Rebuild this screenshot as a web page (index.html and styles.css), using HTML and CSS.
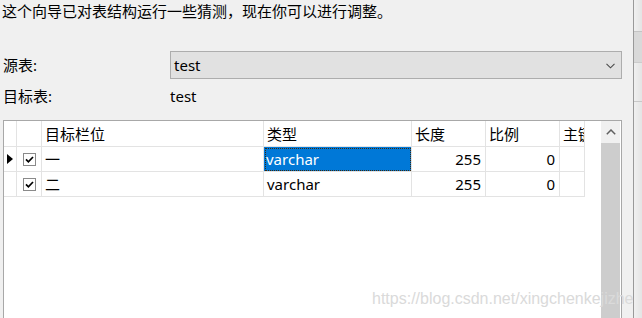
FILE: index.html
```html
<!DOCTYPE html>
<html lang="zh-CN">
<head>
    <meta charset="UTF-8">
    <title>导入向导 - 字段</title>
    <link rel="stylesheet" href="styles.css">
</head>
<body>
    <div class="wizard">
        <div class="main">
            <p class="intro">这个向导已对表结构运行一些猜测，现在你可以进行调整。</p>

            <div class="fields">
                <label class="field-label">源表:</label>
                <div class="combo">
                    <span>test</span>
                    <svg class="combo-arrow" width="9" height="6" viewBox="0 0 9 6">
                        <path d="M0.5 0.8 L4.5 4.8 L8.5 0.8" fill="none" stroke="#4a4a4a" stroke-width="1.1"/>
                    </svg>
                </div>
                <label class="field-label">目标表:</label>
                <div class="field-value">test</div>
            </div>

            <div class="grid-box">
                <table class="grid">
                    <colgroup>
                        <col class="c-rowhead">
                        <col class="c-check">
                        <col class="c-name">
                        <col class="c-type">
                        <col class="c-len">
                        <col class="c-scale">
                        <col class="c-key">
                    </colgroup>
                    <thead>
                        <tr>
                            <th></th>
                            <th></th>
                            <th>目标栏位</th>
                            <th>类型</th>
                            <th>长度</th>
                            <th>比例</th>
                            <th>主键</th>
                        </tr>
                    </thead>
                    <tbody>
                        <tr>
                            <td class="rowhead">
                                <svg width="6" height="10" viewBox="0 0 6 10"><polygon points="0,0 6,5 0,10" fill="#000"/></svg>
                            </td>
                            <td class="check">
                                <svg width="13" height="13" viewBox="0 0 13 13">
                                    <rect x="0.5" y="0.5" width="12" height="12" fill="#fff" stroke="#8a8a8a"/>
                                    <path d="M3 6.3 L5.4 8.8 L10 4" fill="none" stroke="#000" stroke-width="1.7"/>
                                </svg>
                            </td>
                            <td>一</td>
                            <td class="selected">varchar</td>
                            <td class="num">255</td>
                            <td class="num">0</td>
                            <td></td>
                        </tr>
                        <tr>
                            <td class="rowhead"></td>
                            <td class="check">
                                <svg width="13" height="13" viewBox="0 0 13 13">
                                    <rect x="0.5" y="0.5" width="12" height="12" fill="#fff" stroke="#8a8a8a"/>
                                    <path d="M3 6.3 L5.4 8.8 L10 4" fill="none" stroke="#000" stroke-width="1.7"/>
                                </svg>
                            </td>
                            <td>二</td>
                            <td>varchar</td>
                            <td class="num">255</td>
                            <td class="num">0</td>
                            <td></td>
                        </tr>
                    </tbody>
                </table>

                <div class="scrollbar">
                    <div class="scroll-up">
                        <svg width="10" height="6" viewBox="0 0 10 6">
                            <path d="M0.8 5.2 L5 1 L9.2 5.2" fill="none" stroke="#606060" stroke-width="1.5"/>
                        </svg>
                    </div>
                    <div class="scroll-thumb"></div>
                </div>
            </div>
        </div>

        <div class="side">
            <div class="side-band"></div>
        </div>
    </div>

    <div class="watermark">https://blog.csdn.net/xingchenkejizhe</div>
</body>
</html>
```

FILE: styles.css
```css
body {
    margin: 0;
    background: #f0f0f0;
    font-family: "Noto Sans", "Noto Sans CJK SC", sans-serif;
    font-size: 15px;
    color: #000;
    overflow: hidden;
}

.wizard {
    display: flex;
    height: 318px;
    overflow: hidden;
}

.main {
    width: 633px;
    border-right: 1px solid #999;
    flex-shrink: 0;
}

.intro {
    margin: 0;
    padding: 1px 0 0 2px;
    line-height: 20px;
}

.fields {
    display: grid;
    grid-template-columns: 167px 452px;
    grid-template-rows: 28px 24px;
    row-gap: 5px;
    padding-left: 3px;
    margin-top: 30px;
    align-items: center;
}

.field-label {
    line-height: 20px;
}

.combo {
    box-sizing: border-box;
    height: 28px;
    border: 1px solid #adadad;
    background: #e1e1e1;
    display: flex;
    align-items: center;
    justify-content: space-between;
    padding: 0 6px 1px 3px;
}

.combo-arrow {
    margin-top: 2px;
}

.field-value {
    line-height: 20px;
}

.grid-box {
    box-sizing: border-box;
    width: 619px;
    height: 210px;
    margin: 12px 0 0 3px;
    border: 1px solid #a8a8a8;
    background: #fff;
    display: flex;
    align-items: stretch;
}

.grid {
    border-collapse: separate;
    border-spacing: 0;
    table-layout: fixed;
    width: 581px;
    margin-right: 16px;
    align-self: flex-start;
    line-height: 20px;
}

.c-rowhead { width: 13px; }
.c-check { width: 25px; }
.c-name { width: 222px; }
.c-type { width: 148px; }
.c-len { width: 74px; }
.c-scale { width: 74px; }
.c-key { width: 25px; }

.grid th,
.grid td {
    box-sizing: border-box;
    padding: 0 3px;
    border-right: 1px solid #e3e3e3;
    border-bottom: 1px solid #e3e3e3;
    white-space: nowrap;
    overflow: hidden;
    text-align: left;
    font-weight: normal;
    vertical-align: middle;
}

.grid th {
    height: 26px;
}

.grid td {
    height: 25px;
}

.grid th:nth-child(7) {
    padding-right: 0;
    text-overflow: clip;
}

.grid .rowhead {
    padding: 0 0 0 3px;
}

.grid .rowhead svg {
    display: block;
}

.grid .check {
    padding: 0;
    text-align: center;
}

.grid .check svg {
    display: block;
    margin: 0 auto;
}

.grid .num {
    text-align: right;
    padding-right: 4px;
}

.grid .selected {
    background: #0078d7;
    background-clip: padding-box;
    color: #fff;
    padding-left: 2px;
    outline: 1px dotted #3a2a10;
    outline-offset: -2px;
}

.scrollbar {
    width: 19px;
    margin-right: 1px;
    display: flex;
    flex-direction: column;
    background: #f0f0f0;
}

.scroll-up {
    height: 22px;
    display: flex;
    align-items: center;
    justify-content: center;
    padding-left: 1px;
}

.scroll-thumb {
    flex: 1;
    background: #cdcdcd;
}

.side {
    flex: 1;
    background: linear-gradient(to right, #f0f0f0, #e4e4e4);
    position: relative;
}

.side-band {
    margin-top: 31px;
    height: 30px;
    border-top: 1px solid #c4c4c4;
    border-bottom: 1px solid #cccccc;
    background: #d9d9d9;
}

.side::after {
    content: "";
    display: block;
    margin-top: 38px;
    border-top: 1px solid #c8c8c8;
}

.watermark {
    position: absolute;
    left: 372px;
    top: 290px;
    font-family: "Liberation Sans", Arial, sans-serif;
    font-size: 16px;
    color: #dadada;
    white-space: nowrap;
    pointer-events: none;
}
```
